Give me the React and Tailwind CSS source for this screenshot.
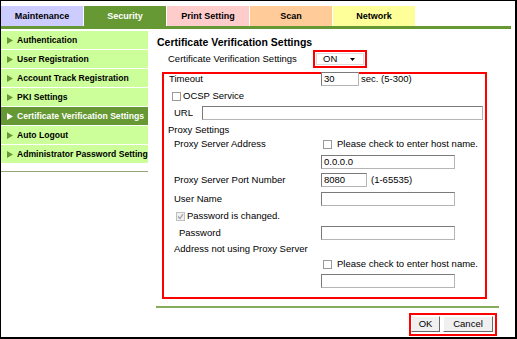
import React from "react";

const tabs = [
  { label: "Maintenance", cls: "bg-[#ccccff] text-black" },
  { label: "Security", cls: "bg-[#669933] text-white" },
  { label: "Print Setting", cls: "bg-[#ffcccc] text-black" },
  { label: "Scan", cls: "bg-[#ffcc99] text-black" },
  { label: "Network", cls: "bg-[#ffff99] text-black" },
];

const menu = [
  "Authentication",
  "User Registration",
  "Account Track Registration",
  "PKI Settings",
  "Certificate Verification Settings",
  "Auto Logout",
  "Administrator Password Setting",
];

const Arrow = ({ white }) => (
  <svg width="6" height="7" viewBox="0 0 6 7" className="shrink-0">
    <path d="M0 0 L6 3.5 L0 7 Z" fill={white ? "#ffffff" : "#669933"} />
  </svg>
);

const Box = ({ checked, disabled }) => (
  <span
    className={
      "inline-flex items-center justify-center w-[9px] h-[9px] border shrink-0 " +
      (disabled ? "border-[#c0c0c0] bg-[#f0f0f0]" : "border-[#9a9a9a] bg-white")
    }
  >
    {checked && (
      <svg width="7" height="7" viewBox="0 0 7 7">
        <path d="M1 3.5 L3 5.5 L6 1.2" fill="none" stroke="#a0a0a0" strokeWidth="1.2" />
      </svg>
    )}
  </span>
);

const Field = ({ w, value }) => (
  <div
    className={
      "h-[14px] border border-[#7a7a7a] border-r-[#b5b5b5] border-b-[#b5b5b5] bg-white pl-[2px] flex items-center leading-[12px] " +
      w
    }
  >
    {value}
  </div>
);

const Row = ({ className = "", children }) => (
  <div className={"flex items-center h-[14px] " + className}>{children}</div>
);

export default function App() {
  return (
    <div className="w-[517px] h-[339px] bg-white border-t border-l border-r-2 border-b-2 border-black overflow-hidden font-['Liberation_Sans',Arial,sans-serif] text-black text-[9.5px] leading-[12px]">
      {/* Tabs */}
      <div className="flex gap-px pt-[5px]">
        {tabs.map((t) => (
          <div
            key={t.label}
            className={"w-[82px] h-[20px] flex items-center justify-center font-bold text-[9px] " + t.cls}
          >
            {t.label}
          </div>
        ))}
      </div>
      <div className="w-[510px] h-[3px] bg-[#669933]" />

      <div className="flex">
        {/* Side menu */}
        <div className="w-[147px] shrink-0 mt-[2px] flex flex-col">
          <div className="flex flex-col gap-px">
            {menu.map((m) => {
              const active = m === "Certificate Verification Settings";
              return (
                <div
                  key={m}
                  className={
                    "h-[18px] flex items-center gap-[4px] pl-[6px] font-bold text-[8.6px] whitespace-nowrap overflow-hidden " +
                    (active ? "bg-[#669933] text-white" : "bg-[#ccff99] text-black")
                  }
                >
                  <Arrow white={active} />
                  {m}
                </div>
              );
            })}
          </div>
          <div className="mt-[8px] h-px bg-[#93a77a]" />
        </div>

        {/* Content */}
        <div className="ml-[9px] w-[343px] flex flex-col">
          <div className="mt-[7px] font-bold text-[10.5px] leading-[12px]">
            Certificate Verification Settings
          </div>

          <div className="flex items-center h-[18px] mt-[2px]">
            <div className="w-[156px] pl-[11px]">Certificate Verification Settings</div>
            <div className="w-[54px] h-[18px] border-2 border-[#ff0000] p-px">
              <div className="h-full border border-[#dcdcdc] flex items-center pl-[6px]">
                <span>ON</span>
                <svg width="5" height="3" viewBox="0 0 5 3" className="ml-[13px]">
                  <path d="M0 0 L5 0 L2.5 3 Z" fill="#000" />
                </svg>
              </div>
            </div>
          </div>

          {/* Settings box */}
          <div className="ml-[5px] mt-[4px] w-[325px] border-2 border-[#ff0000] pb-[9px]">
            <Row className="-mt-[2px]">
              <div className="w-[157px] pl-[5px]">Timeout</div>
              <Field w="w-[38px]" value="30" />
              <span className="ml-[2px]">sec. (5-300)</span>
            </Row>
            <Row className="mt-[3px]">
              <div className="pl-[8px] flex items-center gap-[2px]">
                <Box />
                <span>OCSP Service</span>
              </div>
            </Row>
            <Row className="mt-[3px]">
              <div className="w-[38px] pl-[10px]">URL</div>
              <Field w="w-[281px]" value="" />
            </Row>
            <Row className="mt-[3px]">
              <div className="pl-[4px]">Proxy Settings</div>
            </Row>
            <Row>
              <div className="w-[157px] pl-[10px]">Proxy Server Address</div>
              <div className="pl-[2px] flex items-center gap-[5px]">
                <Box />
                <span>Please check to enter host name.</span>
              </div>
            </Row>
            <Row className="mt-[4px]">
              <div className="w-[157px]" />
              <Field w="w-[134px]" value="0.0.0.0" />
            </Row>
            <Row className="mt-[4px]">
              <div className="w-[157px] pl-[10px]">Proxy Server Port Number</div>
              <Field w="w-[46px]" value="8080" />
              <span className="ml-[4px]">(1-65535)</span>
            </Row>
            <Row className="mt-[5px]">
              <div className="w-[157px] pl-[10px]">User Name</div>
              <Field w="w-[134px]" value="" />
            </Row>
            <Row className="mt-[3px]">
              <div className="pl-[12px] flex items-center gap-[2px]">
                <Box checked disabled />
                <span>Password is changed.</span>
              </div>
            </Row>
            <Row className="mt-[3px]">
              <div className="w-[157px] pl-[15px]">Password</div>
              <Field w="w-[134px]" value="" />
            </Row>
            <Row className="mt-[2px]">
              <div className="pl-[10px]">Address not using Proxy Server</div>
            </Row>
            <Row className="mt-[1px]">
              <div className="w-[157px]" />
              <div className="pl-[2px] flex items-center gap-[5px]">
                <Box />
                <span>Please check to enter host name.</span>
              </div>
            </Row>
            <Row className="mt-[3px]">
              <div className="w-[157px]" />
              <Field w="w-[134px]" value="" />
            </Row>
          </div>

          <div className="-ml-px mt-[7px] w-[343px] h-[2px] bg-[#86ad5c]" />

          <div className="-ml-px w-[343px] flex justify-end pr-[2px] mt-[5px]">
            <div className="h-[23px] border-2 border-[#ff0000] flex items-start gap-[3px] pt-px pr-[2px]">
              <button className="w-[29px] h-[16px] bg-[#f0f0f0] border border-t-white border-l-white border-r-[#696969] border-b-[#696969] text-[9.5px] leading-[12px] flex items-center justify-center">
                OK
              </button>
              <button className="w-[50px] h-[16px] bg-[#f0f0f0] border border-t-white border-l-white border-r-[#696969] border-b-[#696969] text-[9.5px] leading-[12px] flex items-center justify-center">
                Cancel
              </button>
            </div>
          </div>
        </div>
      </div>
    </div>
  );
}
